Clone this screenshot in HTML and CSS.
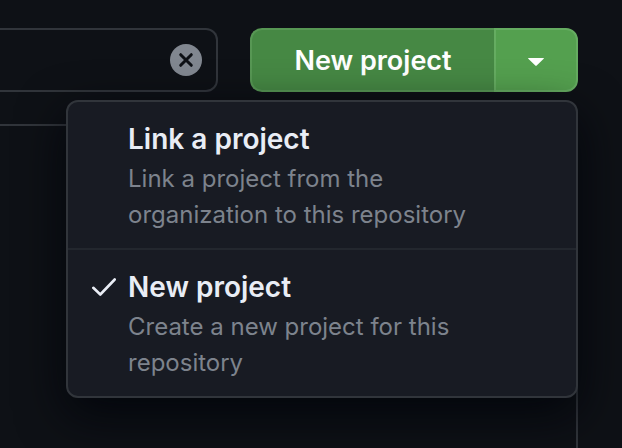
FILE: index.html
```html
<!DOCTYPE html>
<html lang="en">
<head>
<meta charset="utf-8">
<meta name="viewport" content="width=device-width, initial-scale=1">
<title>Projects</title>
<link rel="stylesheet" href="styles.css">
</head>
<body>
<main class="page">
  <div class="toolbar">
    <div class="search">
      <input class="search-input" type="text" aria-label="Search projects">
      <button class="clear" type="button" aria-label="Clear search">
        <svg viewBox="0 0 32 32" width="32" height="32" aria-hidden="true">
          <circle class="clear-disc" cx="16" cy="16" r="16"/>
          <path class="clear-cross" d="M10.7 10.7l10.6 10.6M21.3 10.7L10.7 21.3"/>
        </svg>
      </button>
    </div>
    <div class="split">
      <button class="btn btn-main" type="button">New project</button>
      <button class="btn btn-toggle" type="button" aria-label="Choose project action" aria-expanded="true">
        <svg viewBox="0 0 16 8" width="16" height="8" aria-hidden="true"><path fill="currentColor" d="M0.6 0h14.8q.9 0 .3.7L8.7 7.6q-.7.7-1.4 0L.3.7Q-.3 0 .6 0z"/></svg>
      </button>
      <div class="menu" role="menu">
        <button class="item" type="button" role="menuitemradio" aria-checked="false">
          <span class="item-mark"></span>
          <span class="item-body">
            <span class="item-title">Link a project</span>
            <span class="item-text">Link a project from the organization to this repository</span>
          </span>
        </button>
        <button class="item" type="button" role="menuitemradio" aria-checked="true">
          <span class="item-mark">
            <svg viewBox="0 0 24 18" width="24" height="18" aria-hidden="true"><path class="check" d="M1.3 9.8l7 6.7L22.7 1.5"/></svg>
          </span>
          <span class="item-body">
            <span class="item-title">New project</span>
            <span class="item-text">Create a new project for this repository</span>
          </span>
        </button>
      </div>
    </div>
  </div>
  <section class="panel" aria-label="Projects"></section>
</main>
</body>
</html>
```
FILE: styles.css
```css
* {
  box-sizing: border-box;
}

body {
  margin: 0;
  background: #0e1116;
  color: #e9edf5;
  font-family: Inter, "Liberation Sans", sans-serif;
}

button {
  font: inherit;
  color: inherit;
  cursor: pointer;
}

svg {
  display: block;
}

.page {
  display: flex;
  flex-direction: column;
  gap: 32px;
  min-height: 100vh;
  padding: 28px 44px 0 0;
}

.toolbar {
  display: flex;
  gap: 32px;
}

.search {
  display: flex;
  flex: 1;
  align-items: center;
  min-width: 0;
  height: 64px;
  padding-right: 14px;
  border: 2px solid #31353b;
  border-left: 0;
  border-radius: 0 12px 12px 0;
}

.search-input {
  flex: 1;
  min-width: 0;
  border: 0;
  outline: 0;
  background: transparent;
  color: inherit;
  font: inherit;
  font-size: 28px;
}

.clear {
  padding: 0;
  border: 0;
  background: none;
}

.clear-disc {
  fill: #818790;
}

.clear-cross {
  fill: none;
  stroke: #0e1116;
  stroke-width: 3;
  stroke-linecap: round;
}

.split {
  position: relative;
  display: flex;
}

.btn {
  display: flex;
  align-items: center;
  justify-content: center;
  height: 64px;
  border: 2px solid #579754;
  background: #468844;
  color: #fff;
  font-size: 27px;
  font-weight: 600;
}

.btn-main {
  width: 244px;
  padding: 0;
  border-right: 0;
  border-radius: 12px 0 0 12px;
}

.btn-toggle {
  width: 84px;
  padding: 4px 0 0;
  border-color: #65ac61;
  border-radius: 0 12px 12px 0;
  background: #54a04f;
}

.menu {
  position: absolute;
  top: 72px;
  right: 0;
  width: 512px;
  overflow: hidden;
  border: 2px solid #31353b;
  border-radius: 12px;
  background: #181b23;
  box-shadow: 0 16px 48px rgba(1, 4, 9, 0.85);
}

.item {
  display: flex;
  width: 100%;
  padding: 15px 64px 15px 24px;
  border: 0;
  background: none;
  text-align: left;
}

.item + .item {
  border-top: 2px solid #23272e;
}

.item-mark {
  display: flex;
  flex: none;
  align-items: center;
  width: 36px;
  height: 44px;
}

.check {
  fill: none;
  stroke: #e9edf5;
  stroke-width: 2.6;
  stroke-linecap: round;
  stroke-linejoin: round;
}

.item-title,
.item-text {
  display: block;
}

.item-title {
  font-size: 28px;
  font-weight: 600;
  line-height: 44px;
}

.item-text {
  color: #7d838d;
  font-size: 24px;
  line-height: 36px;
}

.panel {
  flex: 1;
  border-top: 2px solid #31353b;
  border-right: 2px solid #31353b;
  border-radius: 0 12px 0 0;
}
```
